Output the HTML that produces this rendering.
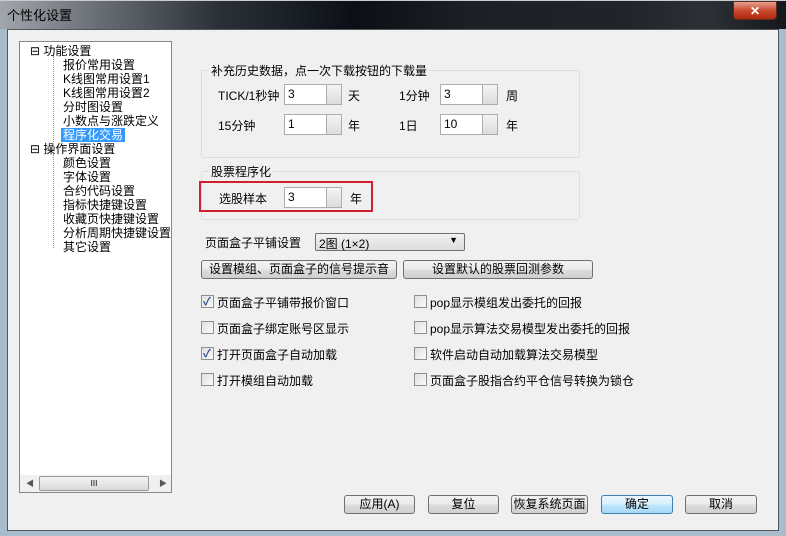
<!DOCTYPE html>
<html><head><meta charset="utf-8"><style>
*{box-sizing:border-box;margin:0;padding:0}
body{width:786px;height:536px;overflow:hidden;background:#a9bccb;font-family:"Liberation Sans","Noto Sans CJK SC","WenQuanYi Zen Hei",sans-serif;font-size:12px;color:#000;position:relative}
.a{position:absolute;white-space:nowrap}
#title{left:0;top:0;width:786px;height:29px;border-top:1px solid #c8ccd0;background:linear-gradient(90deg,#a0a6ac 0%,#6a7076 12%,#2a3036 28%,#0b1016 45%,#1c2024 60%,#20252a 80%,#2c3136 90%,#14181c 100%)}
#client{left:7px;top:29px;width:772px;height:502px;background:#f0f0f0;border:1px solid #50565c}
.tree{left:19px;top:41px;width:153px;height:452px;background:#fff;border:1px solid #828790;overflow:hidden}
.ti{position:absolute;line-height:14px}
.grp{border:1px solid #d5dfe5;border-radius:3px}
.leg{background:#f0f0f0;padding:0 2px}
.inp{background:#fff;border:1px solid #abadb3;height:21px;padding:2px 3px;font-size:12px}
.spin{width:16px;height:21px;border:1px solid #abadb3;background:linear-gradient(#f4f4f4,#dcdcdc)}
.btn{border:1px solid #707070;border-radius:3px;background:linear-gradient(#f2f2f2 0%,#ebebeb 50%,#dddddd 51%,#cfcfcf 100%);text-align:center;line-height:17px;height:19px}
.cb{width:13px;height:13px;border:1px solid #8e8f8f;background:linear-gradient(135deg,#e0e0e0,#fafafa)}
.ck::after{content:"✓";position:absolute;left:1px;top:-3px;font-size:11px;color:#2c4a8a;font-weight:bold}
</style></head><body>
<div class="a" id="title"></div>
<div class="a" style="left:7px;top:5px;color:#000;font-size:13px">个性化设置</div>
<div class="a" style="left:733px;top:1px;width:44px;height:19px;border:1px solid #5a2a20;border-radius:0 0 4px 4px;background:linear-gradient(#e8a090,#c84a30 50%,#b02810);color:#fff;text-align:center;font-weight:bold;line-height:18px">✕</div>
<div class="a" id="client"></div>
<div class="a tree">
<div class="ti" style="left:10px;top:2px">⊟ 功能设置</div>
<div class="ti" style="left:43px;top:16px">报价常用设置</div>
<div class="ti" style="left:43px;top:30px">K线图常用设置1</div>
<div class="ti" style="left:43px;top:44px">K线图常用设置2</div>
<div class="ti" style="left:43px;top:58px">分时图设置</div>
<div class="ti" style="left:43px;top:72px">小数点与涨跌定义</div>
<div class="ti" style="left:41px;top:86px;background:#3399ff;color:#fff;padding:0 2px">程序化交易</div>
<div class="ti" style="left:10px;top:100px">⊟ 操作界面设置</div>
<div class="ti" style="left:43px;top:114px">颜色设置</div>
<div class="ti" style="left:43px;top:128px">字体设置</div>
<div class="ti" style="left:43px;top:142px">合约代码设置</div>
<div class="ti" style="left:43px;top:156px">指标快捷键设置</div>
<div class="ti" style="left:43px;top:170px">收藏页快捷键设置</div>
<div class="ti" style="left:43px;top:184px">分析周期快捷键设置</div>
<div class="ti" style="left:43px;top:198px">其它设置</div>
<div class="ti" style="left:33px;top:14px;width:0;height:86px;border-left:1px dotted #999"></div>
<div class="ti" style="left:33px;top:112px;width:0;height:94px;border-left:1px dotted #999"></div>
<div class="ti" style="left:0px;top:433px;width:151px;height:17px;background:#f0f0f0"></div>
<div class="ti" style="left:19px;top:434px;width:110px;height:15px;border:1px solid #999;border-radius:2px;background:linear-gradient(#f4f4f4,#d8d8d8);text-align:center;font-size:8px;line-height:13px">III</div>
<div class="ti" style="left:6px;top:435px;font-size:8px;color:#555">◀</div>
<div class="ti" style="left:139px;top:435px;font-size:8px;color:#555">▶</div>
</div>

<div class="a grp" style="left:201px;top:70px;width:379px;height:88px"></div>
<div class="a leg" style="left:209px;top:62px">补充历史数据，点一次下载按钮的下载量</div>
<div class="a" style="left:218px;top:87px">TICK/1秒钟</div>
<div class="a inp" style="left:284px;top:84px;width:43px">3</div><div class="a spin" style="left:326px;top:84px"></div>
<div class="a" style="left:348px;top:87px">天</div>
<div class="a" style="left:399px;top:87px">1分钟</div>
<div class="a inp" style="left:440px;top:84px;width:43px">3</div><div class="a spin" style="left:482px;top:84px"></div>
<div class="a" style="left:506px;top:87px">周</div>
<div class="a" style="left:218px;top:117px">15分钟</div>
<div class="a inp" style="left:284px;top:114px;width:43px">1</div><div class="a spin" style="left:326px;top:114px"></div>
<div class="a" style="left:348px;top:117px">年</div>
<div class="a" style="left:399px;top:117px">1日</div>
<div class="a inp" style="left:440px;top:114px;width:43px">10</div><div class="a spin" style="left:482px;top:114px"></div>
<div class="a" style="left:506px;top:117px">年</div>

<div class="a grp" style="left:201px;top:171px;width:379px;height:49px"></div>
<div class="a leg" style="left:209px;top:163px">股票程序化</div>
<div class="a" style="left:199px;top:181px;width:174px;height:31px;border:2px solid #d02030"></div>
<div class="a" style="left:219px;top:190px">选股样本</div>
<div class="a inp" style="left:284px;top:187px;width:43px">3</div><div class="a spin" style="left:326px;top:187px"></div>
<div class="a" style="left:350px;top:190px">年</div>

<div class="a" style="left:205px;top:234px">页面盒子平铺设置</div>
<div class="a" style="left:315px;top:233px;width:150px;height:18px;border:1px solid #707070;border-radius:2px;background:linear-gradient(#f2f2f2,#dcdcdc);padding:1px 3px">2图 (1×2)<span style="position:absolute;right:6px;top:1px;font-size:9px">▼</span></div>
<div class="a btn" style="left:201px;top:260px;width:196px">设置模组、页面盒子的信号提示音</div>
<div class="a btn" style="left:403px;top:260px;width:190px">设置默认的股票回测参数</div>

<div class="a cb ck" style="left:201px;top:295px"></div><div class="a" style="left:217px;top:294px">页面盒子平铺带报价窗口</div>
<div class="a cb" style="left:201px;top:321px"></div><div class="a" style="left:217px;top:320px">页面盒子绑定账号区显示</div>
<div class="a cb ck" style="left:201px;top:347px"></div><div class="a" style="left:217px;top:346px">打开页面盒子自动加载</div>
<div class="a cb" style="left:201px;top:373px"></div><div class="a" style="left:217px;top:372px">打开模组自动加载</div>
<div class="a cb" style="left:414px;top:295px"></div><div class="a" style="left:430px;top:294px">pop显示模组发出委托的回报</div>
<div class="a cb" style="left:414px;top:321px"></div><div class="a" style="left:430px;top:320px">pop显示算法交易模型发出委托的回报</div>
<div class="a cb" style="left:414px;top:347px"></div><div class="a" style="left:430px;top:346px">软件启动自动加载算法交易模型</div>
<div class="a cb" style="left:414px;top:373px"></div><div class="a" style="left:430px;top:372px">页面盒子股指合约平仓信号转换为锁仓</div>

<div class="a btn" style="left:344px;top:495px;width:71px">应用(A)</div>
<div class="a btn" style="left:428px;top:495px;width:71px">复位</div>
<div class="a btn" style="left:511px;top:495px;width:77px">恢复系统页面</div>
<div class="a btn" style="left:601px;top:495px;width:72px;border-color:#3c7fb1;background:linear-gradient(#eaf6fd,#d9f0fc 50%,#bee6fd 51%,#a7d9f5)">确定</div>
<div class="a btn" style="left:685px;top:495px;width:72px">取消</div>
</body></html>
